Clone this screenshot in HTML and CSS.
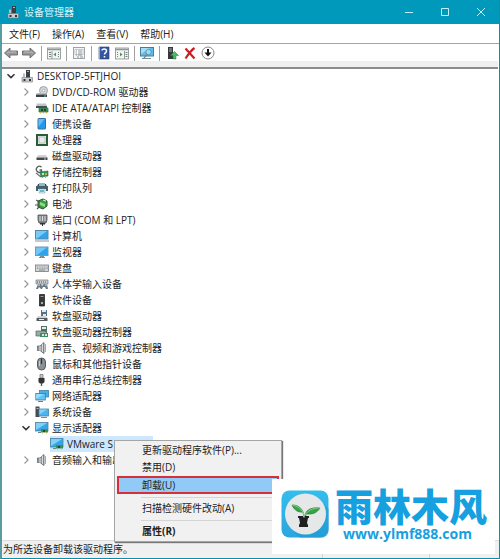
FILE: index.html
```html
<!DOCTYPE html>
<html lang="zh-CN">
<head>
<meta charset="utf-8">
<title>设备管理器</title>
<link rel="stylesheet" href="styles.css">
</head>
<body>
<svg class="defs" aria-hidden="true">
  <symbol id="closed" viewBox="0 0 12 12"><path d="M4.500 2.500L8 6 4.500 9.500" fill="none" stroke="#999" stroke-width="1.200"/></symbol>
  <symbol id="open" viewBox="0 0 12 12"><path d="M2.500 4.200L6 7.600 9.500 4.200" fill="none" stroke="#333" stroke-width="1.500"/></symbol>
  <symbol id="pc" viewBox="0 0 14 14"><path d="M6 1h4v8H6z" fill="#3a3f46"/><path d="M7 2h2v1H7z" fill="#a9b4bd"/><path d="M2 8.500h10.500V13H2z" fill="#c9cdd0" stroke="#777" stroke-width=".6"/><path d="M3.500 10h2v2h-2zM9 10h2v2H9z" fill="#333"/><path d="M3 5l1-1 1 1v3H3z" fill="#bbb"/></symbol>
  <symbol id="dvd" viewBox="0 0 14 14"><circle cx="8.500" cy="5.500" r="4" fill="#d5d8da" stroke="#8b9093" stroke-width=".8"/><circle cx="8.500" cy="5.500" r="1.300" fill="#fff" stroke="#888" stroke-width=".6"/><path d="M2 8h8l2 1.500H1z" fill="#bcc0c2"/><path d="M1 9.500h11V12H1z" fill="#3d4144"/><path d="M9 10.500h2v1H9z" fill="#6c9"/></symbol>
  <symbol id="ide" viewBox="0 0 14 14"><path d="M2 2.500h9l1 3H1z" fill="#bfc4c6"/><path d="M1 5h11v2H1z" fill="#4a5053"/><path d="M4 7h9v4H4z" fill="#3d9a5a" stroke="#246b3d" stroke-width=".7"/><path d="M6 8h2v2H6zM9 8h2v2H9z" fill="#263d30"/><path d="M5 11h1v1.500H5zM8 11h1v1.500H8zM11 11h1v1.500h-1z" fill="#d3b448"/></symbol>
  <symbol id="portable" viewBox="0 0 14 14"><rect x="3" y="1.500" width="7.500" height="10.500" rx=".6" fill="#2397ed" stroke="#3d6f96"/><path d="M3.500 2h6l-6 8z" fill="#61bcfa"/></symbol>
  <symbol id="cpu" viewBox="0 0 14 14"><rect x="2" y="2" width="10" height="10" fill="#e8ece8" stroke="#2c5a3c" stroke-width="2"/><path d="M4 4h6v6H4z" fill="none" stroke="#b4c4b8"/></symbol>
  <symbol id="disk" viewBox="0 0 14 14"><path d="M3 6h8l1.500 2.500h-11z" fill="#d1d3d4"/><path d="M1.500 8.500h11V11h-11z" fill="#45494b"/><path d="M9 9.500h2v1H9z" fill="#b8d8c2"/></symbol>
  <symbol id="storage" viewBox="0 0 14 14"><path d="M6.500 2.200A3 3 0 1 0 6.500 6.500V5H4.500" fill="none" stroke="#58605c" stroke-width="1.300"/><path d="M1 8l5 4" stroke="#777" stroke-width="1.500"/><path d="M5 7l8-1v5l-7 1z" fill="#32935a" stroke="#23663b" stroke-width=".6"/><path d="M7 8h2v2H7z" fill="#d0d9d3"/><path d="M10 8h2v2h-2zM7 12h1v1H7zM10 11h1v2h-1z" fill="#d8a72d"/></symbol>
  <symbol id="printer" viewBox="0 0 14 14"><path d="M3 3h8l1 3H2z" fill="#30474e"/><path d="M4 2h6v3H4z" fill="#8bbcc8"/><path d="M1 5h12v5h-2V8H3v2H1z" fill="#466069"/><path d="M4 8h6v4H4z" fill="#dff4f9" stroke="#6b91a0" stroke-width=".5"/><path d="M5 9h4v2H5z" fill="#57bdda"/></symbol>
  <symbol id="battery" viewBox="0 0 14 14"><path d="M3 4l5-2 4 2v5l-4 3-5-2z" fill="#3c9b4a" stroke="#24582d"/><path d="M5 5l5 2v3L5 8z" fill="#8fdb82"/><path d="M1 3l4 2M0 8h4M2 12l3-3" stroke="#555" stroke-width="1.200"/><path d="M8 3l3 1" stroke="#d6f4cd"/></symbol>
  <symbol id="port" viewBox="0 0 14 14"><path d="M3 2h9v5l-1 3H4L3 7z" fill="#84888a" stroke="#4d5154" stroke-width=".8"/><path d="M5 3v5M7.500 3v5M10 3v5" stroke="#d8dcde"/><path d="M5 10h5v1.500H8V13H7v-1.500H5z" fill="#333"/></symbol>
  <symbol id="computer" viewBox="0 0 14 14"><rect x=".5" y="1.500" width="12.500" height="8.500" fill="#32a4e8" stroke="#5489a7"/><path d="M1 2h11L2 9.500H1z" fill="#79cbf6"/><path d="M0 12h14" stroke="#8c9499"/></symbol>
  <symbol id="monitor" viewBox="0 0 14 14"><rect x=".5" y="2" width="12.500" height="8.500" fill="#2da4e9" stroke="#6c9bb6"/><path d="M1 2.500h11L2 10H1z" fill="#73c6f5"/><path d="M5 11h4v1h1v1H4v-1h1z" fill="#778e9c"/></symbol>
  <symbol id="keyboard" viewBox="0 0 14 14"><rect x=".5" y="4" width="13" height="6.500" fill="#d2d5d6" stroke="#777b7e" stroke-width=".8"/><path d="M2 6h11M2 7.500h11" stroke="#85898c" stroke-width=".7" stroke-dasharray="1 .7"/><path d="M4 9h6" stroke="#888"/></symbol>
  <symbol id="hid" viewBox="0 0 14 14"><path d="M1 3h12v4H1z" fill="#c9cdd0" stroke="#777" stroke-width=".7"/><path d="M2 5h10" stroke="#555" stroke-dasharray="1 1"/><path d="M1 12l2-5h3l1 2 2-2h3l1 5h-2l-1-2H8L7 12H6l-2-2-1 2z" fill="#687986"/><path d="M3 8h2M10 8h2" stroke="#cce3f4"/></symbol>
  <symbol id="software" viewBox="0 0 14 14"><path d="M4.500 1.500h5V13h-5z" fill="#363a3c" stroke="#17191a" stroke-width=".7"/><path d="M5.500 3.500h3" stroke="#90999d"/><path d="M6 9h2v2H6z" fill="#9bb8a5"/></symbol>
  <symbol id="floppy" viewBox="0 0 14 14"><path d="M6 1h6v6H6z" fill="#54738b"/><path d="M7 1h4v2H7zM8 5h3v2H8z" fill="#e4e9eb"/><path d="M3 7h8l1.500 2h-11z" fill="#d0d3d5"/><path d="M1.500 9h11v3h-11z" fill="#555b5e"/><path d="M4 10.500h5" stroke="#eee"/></symbol>
  <symbol id="floppyctl" viewBox="0 0 14 14"><path d="M6 1h6v6H6z" fill="#4d7269"/><path d="M7 2h4v2H7z" fill="#e5ecea"/><path d="M1 6h9l2 2v3H1z" fill="#9caaa3" stroke="#56605b" stroke-width=".7"/><path d="M5 8h8v4H5z" fill="#37915c"/><path d="M7 9h2v2H7zM10 9h2v2h-2z" fill="#d8e7dc"/></symbol>
  <symbol id="speaker" viewBox="0 0 14 14"><path d="M2.500 5H5l4-3.500v11L5 9.500H2.500z" fill="#91979c" stroke="#5f656a" stroke-width=".8"/><path d="M5 5v5" stroke="#e2e4e5"/><path d="M10.500 3v8" stroke="#a7acb0"/><path d="M7.500 3v8" stroke="#d6d8da"/></symbol>
  <symbol id="mouse" viewBox="0 0 14 14"><rect x="2.500" y="1" width="8" height="12" rx="4" fill="#8a9094" stroke="#565b5e"/><path d="M6.500 1.500V7" stroke="#333" stroke-width="1.200"/><path d="M4.500 4v5" stroke="#c5cbce"/></symbol>
  <symbol id="usb" viewBox="0 0 14 14"><path d="M5 1.500h3V5H5z" fill="#ccc" stroke="#666" stroke-width=".7"/><path d="M3.500 5h6v4L8 10.500H5L3.500 9z" fill="#333"/><path d="M6.500 10v3" stroke="#555" stroke-width="1.300"/></symbol>
  <symbol id="network" viewBox="0 0 14 14"><rect x="4.500" y="1.500" width="9" height="6.500" fill="#45afe9" stroke="#447fa0" stroke-width=".8"/><rect x=".8" y="4.500" width="9.500" height="6.500" fill="#5fc4f7" stroke="#3f7ba0" stroke-width=".8"/><path d="M1.200 5H9l-7.800 5z" fill="#98dcfb"/><path d="M3 12.500h5" stroke="#5b8295"/></symbol>
  <symbol id="system" viewBox="0 0 14 14"><path d="M.5 1.500h4V12h-4z" fill="#454b4f"/><path d="M1.500 3h2v1h-2z" fill="#b7bec1"/><rect x="4" y="4" width="9.500" height="7" fill="#49b5ef" stroke="#4685a8" stroke-width=".8"/><path d="M4.500 4.500H12l-7.500 5z" fill="#85d2fa"/><path d="M6 12.500h6" stroke="#708c9b"/></symbol>
  <symbol id="display" viewBox="0 0 14 14"><rect x=".5" y="1.500" width="12.500" height="8.500" fill="#35a7e8" stroke="#4f839e" stroke-width=".8"/><path d="M1 2h11L1 9z" fill="#83cff5"/><path d="M6 8h7v3.500H6z" fill="#399153"/><path d="M8 9h2v2H8z" fill="#254b31"/><path d="M7 12h1M11 12h1" stroke="#d7ae36"/><path d="M3 11.500h3" stroke="#688391"/></symbol>
  <symbol id="back" viewBox="0 0 14 14"><path d="M.5 7L6 2v3h7.500v4H6v3z" fill="#989898" stroke="#686868" stroke-width=".9"/><path d="M3 7l2-1h7" fill="none" stroke="#bbb"/></symbol>
  <symbol id="forward" viewBox="0 0 14 14"><path d="M13.500 7L8 2v3H.5v4H8v3z" fill="#989898" stroke="#686868" stroke-width=".9"/><path d="M2 6h7l2 1" fill="none" stroke="#bbb"/></symbol>
  <symbol id="consoletree" viewBox="0 0 14 14"><rect x=".5" y="2" width="13" height="11" fill="#f2f5f2" stroke="#848b8c" stroke-width=".8"/><path d="M1 3.500h12" stroke="#8b959b" stroke-width="1.500"/><path d="M5 5v8" stroke="#999"/><path d="M2 6.500h2M2 8.500h2M2 10.500h2M11 6.500h1M11 8.500h1M11 10.500h1" stroke="#718387"/><path d="M9 6.500l-2.500 2 2.500 2z" fill="#49925a"/></symbol>
  <symbol id="properties" viewBox="0 0 14 14"><rect x="1.500" y="1.500" width="11" height="11" fill="#f4f4f4" stroke="#969b9e" stroke-width=".9"/><path d="M3 3.500h8v5H3z" fill="#fff" stroke="#a3aaae" stroke-width=".6"/><path d="M4 5h1M6 5h4M4 7h1M6 7h4M4 9h1M6 9h4M5 11h2M8 11h3" stroke="#8c9499"/></symbol>
  <symbol id="help" viewBox="0 0 14 14"><path d="M2 1h10v12H2z" fill="#3556a3" stroke="#263a72" stroke-width=".6"/><path d="M2.500 1v12" stroke="#8da8dc"/><path d="M5 4.500C5 2.500 9.500 2.500 9.500 5 9.500 6.800 7.500 6.500 7.500 8.500M7.500 10v1.500" fill="none" stroke="#fff" stroke-width="1.500"/></symbol>
  <symbol id="actionpane" viewBox="0 0 14 14"><rect x=".5" y="2" width="13" height="11" fill="#f2f5f2" stroke="#848b8c" stroke-width=".8"/><path d="M1 3.500h12" stroke="#8b959b" stroke-width="1.500"/><path d="M9.500 5v8" stroke="#999"/><path d="M2 6.500h1M2 8.500h1M2 10.500h1M10.500 6.500h2M10.500 8.500h2M10.500 10.500h2" stroke="#718387"/><path d="M5 6.500l2.500 2L5 10.500z" fill="#49925a"/></symbol>
  <symbol id="scan" viewBox="0 0 14 14"><rect x=".5" y="1.500" width="13" height="8.500" fill="#64bce6" stroke="#477d98"/><path d="M1 2h9L1 8z" fill="#a5def5"/><circle cx="8.500" cy="6" r="2.700" fill="#9cdcf5" stroke="#3f91b6" stroke-width=".8"/><path d="M7 8l-3 4" stroke="#7a898e" stroke-width="1.400"/><path d="M2 12.500h9" stroke="#78909b"/></symbol>
  <symbol id="update" viewBox="0 0 14 14"><path d="M3 1h5v12H3z" fill="#36393a"/><path d="M4 3h3M4 5h3" stroke="#a8adaf"/><path d="M8 13V9.500H5.500L9.500 5.500l4 4H11V13z" fill="#4cb868" stroke="#237a3a" stroke-width=".5"/></symbol>
  <symbol id="remove" viewBox="0 0 14 14"><path d="M2.500 2.500l9 10M11.500 2c-3 2-6 6-9 10.500" fill="none" stroke="#c91e25" stroke-width="2.200"/></symbol>
  <symbol id="disable" viewBox="0 0 14 14"><circle cx="7" cy="7" r="6" fill="#fff" stroke="#7a7a7a" stroke-width=".9"/><path d="M7 3v4" stroke="#111" stroke-width="2"/><path d="M3.500 6.500h7L7 10.500z" fill="#111"/></symbol>
</svg>

<div class="window">
  <header class="titlebar">
    <svg class="icon"><use href="#pc"/></svg>
    <h1 class="title">设备管理器</h1>
    <div class="controls">
      <button class="control" aria-label="最小化"><svg viewBox="0 0 10 10"><path d="M1 5.500h8"/></svg></button>
      <button class="control" aria-label="最大化"><svg viewBox="0 0 10 10"><path d="M1.500 1.500h7v7h-7z"/></svg></button>
      <button class="control" aria-label="关闭"><svg viewBox="0 0 10 10"><path d="M1 1l8 8M9 1L1 9"/></svg></button>
    </div>
  </header>

  <nav class="menubar">
    <button>文件(F)</button><button>操作(A)</button><button>查看(V)</button><button>帮助(H)</button>
  </nav>

  <div class="toolbar" role="toolbar">
    <button aria-label="后退"><svg class="icon"><use href="#back"/></svg></button>
    <button aria-label="前进"><svg class="icon"><use href="#forward"/></svg></button>
    <i class="divider"></i>
    <button aria-label="显示控制台树"><svg class="icon"><use href="#consoletree"/></svg></button>
    <i class="divider"></i>
    <button aria-label="属性"><svg class="icon"><use href="#properties"/></svg></button>
    <i class="divider"></i>
    <button aria-label="帮助"><svg class="icon"><use href="#help"/></svg></button>
    <button aria-label="显示操作窗格"><svg class="icon"><use href="#actionpane"/></svg></button>
    <i class="divider"></i>
    <button aria-label="扫描"><svg class="icon"><use href="#scan"/></svg></button>
    <i class="divider"></i>
    <button aria-label="更新驱动"><svg class="icon"><use href="#update"/></svg></button>
    <button aria-label="卸载"><svg class="icon"><use href="#remove"/></svg></button>
    <button aria-label="禁用"><svg class="icon"><use href="#disable"/></svg></button>
  </div>

  <main class="content">
    <ul class="tree" role="tree">
      <li>
        <div class="row"><svg class="chevron"><use href="#open"/></svg><svg class="icon"><use href="#pc"/></svg><span>DESKTOP-5FTJHOI</span></div>
        <ul>
          <li class="row"><svg class="chevron"><use href="#closed"/></svg><svg class="icon"><use href="#dvd"/></svg><span>DVD/CD-ROM 驱动器</span></li>
          <li class="row"><svg class="chevron"><use href="#closed"/></svg><svg class="icon"><use href="#ide"/></svg><span>IDE ATA/ATAPI 控制器</span></li>
          <li class="row"><svg class="chevron"><use href="#closed"/></svg><svg class="icon"><use href="#portable"/></svg><span>便携设备</span></li>
          <li class="row"><svg class="chevron"><use href="#closed"/></svg><svg class="icon"><use href="#cpu"/></svg><span>处理器</span></li>
          <li class="row"><svg class="chevron"><use href="#closed"/></svg><svg class="icon"><use href="#disk"/></svg><span>磁盘驱动器</span></li>
          <li class="row"><svg class="chevron"><use href="#closed"/></svg><svg class="icon"><use href="#storage"/></svg><span>存储控制器</span></li>
          <li class="row"><svg class="chevron"><use href="#closed"/></svg><svg class="icon"><use href="#printer"/></svg><span>打印队列</span></li>
          <li class="row"><svg class="chevron"><use href="#closed"/></svg><svg class="icon"><use href="#battery"/></svg><span>电池</span></li>
          <li class="row"><svg class="chevron"><use href="#closed"/></svg><svg class="icon"><use href="#port"/></svg><span>端口 (COM 和 LPT)</span></li>
          <li class="row"><svg class="chevron"><use href="#closed"/></svg><svg class="icon"><use href="#computer"/></svg><span>计算机</span></li>
          <li class="row"><svg class="chevron"><use href="#closed"/></svg><svg class="icon"><use href="#monitor"/></svg><span>监视器</span></li>
          <li class="row"><svg class="chevron"><use href="#closed"/></svg><svg class="icon"><use href="#keyboard"/></svg><span>键盘</span></li>
          <li class="row"><svg class="chevron"><use href="#closed"/></svg><svg class="icon"><use href="#hid"/></svg><span>人体学输入设备</span></li>
          <li class="row"><svg class="chevron"><use href="#closed"/></svg><svg class="icon"><use href="#software"/></svg><span>软件设备</span></li>
          <li class="row"><svg class="chevron"><use href="#closed"/></svg><svg class="icon"><use href="#floppy"/></svg><span>软盘驱动器</span></li>
          <li class="row"><svg class="chevron"><use href="#closed"/></svg><svg class="icon"><use href="#floppyctl"/></svg><span>软盘驱动器控制器</span></li>
          <li class="row"><svg class="chevron"><use href="#closed"/></svg><svg class="icon"><use href="#speaker"/></svg><span>声音、视频和游戏控制器</span></li>
          <li class="row"><svg class="chevron"><use href="#closed"/></svg><svg class="icon"><use href="#mouse"/></svg><span>鼠标和其他指针设备</span></li>
          <li class="row"><svg class="chevron"><use href="#closed"/></svg><svg class="icon"><use href="#usb"/></svg><span>通用串行总线控制器</span></li>
          <li class="row"><svg class="chevron"><use href="#closed"/></svg><svg class="icon"><use href="#network"/></svg><span>网络适配器</span></li>
          <li class="row"><svg class="chevron"><use href="#closed"/></svg><svg class="icon"><use href="#system"/></svg><span>系统设备</span></li>
          <li>
            <div class="row"><svg class="chevron"><use href="#open"/></svg><svg class="icon"><use href="#display"/></svg><span>显示适配器</span></div>
            <ul>
              <li class="row selected">
                <i class="chevron"></i>
                <div class="highlight"><svg class="icon"><use href="#display"/></svg><span>VMware S</span></div>
                <div class="context" role="menu">
                  <button role="menuitem">更新驱动程序软件(P)...</button>
                  <button role="menuitem">禁用(D)</button>
                  <button role="menuitem" class="marked">卸载(U)</button>
                  <hr>
                  <button role="menuitem">扫描检测硬件改动(A)</button>
                  <hr>
                  <button role="menuitem" class="default">属性(R)</button>
                </div>
              </li>
            </ul>
          </li>
          <li class="row"><svg class="chevron"><use href="#closed"/></svg><svg class="icon"><use href="#speaker"/></svg><span>音频输入和输出</span></li>
        </ul>
      </li>
    </ul>
  </main>

  <footer class="status"><span>为所选设备卸载该驱动程序。</span><span></span><span></span></footer>
</div>

<aside class="brand">
  <svg class="emblem" viewBox="0 0 48 48" aria-hidden="true">
    <defs><linearGradient id="blue" x1="0" y1="0" x2="0" y2="1"><stop offset="0" stop-color="#33bdec"/><stop offset="1" stop-color="#2aa6de"/></linearGradient></defs>
    <rect x=".5" y=".5" width="47" height="47" rx="8" fill="url(#blue)"/>
    <path d="M10 39L39 10l9 9v21a8 8 0 0 1-8 8H19z" fill="#168fc8" opacity=".35"/>
    <circle cx="24.500" cy="24" r="20.500" fill="#e5e7e8"/>
    <path d="M23 26C22 19 18 15 11 15c3 6 6 7 10 7M24 27c0-7 6-10 15-9-4 6-8 6-13 6" fill="#37a448" stroke="#218236" stroke-width=".8"/>
    <path d="M11 15c6 1 10 4 12 10M39 18c-7 0-12 2-15 7" fill="none" stroke="#b6dda9" stroke-width=".7"/>
    <path d="M17 26h5l1 2 1-2h4v2h-1l-1 5 1 2v2h-9v-2l1-2-1-5h-1z" fill="#1f2022"/>
  </svg>
  <div class="wordmark"><strong>雨林木风</strong><span>www.ylmf888.com</span></div>
</aside>
</body>
</html>
```

FILE: styles.css
```css
* { box-sizing: border-box; }

body {
  margin: 0;
  font: 10px/16px "Open Sans", "Noto Sans CJK SC", sans-serif;
  color: #222;
  background: #fff;
}

button {
  padding: 0;
  border: 0;
  background: none;
  font: inherit;
  color: inherit;
}

ul { margin: 0; padding: 0; list-style: none; }
svg { display: block; }
.defs { position: absolute; width: 0; height: 0; }
.icon { flex: none; width: 14px; height: 14px; }
.chevron { flex: none; width: 12px; height: 12px; }

.window {
  display: flex;
  flex-direction: column;
  min-height: 100vh;
  border: solid #0a8fa8;
  border-width: 0 1px 1px 2px;
  border-left-color: #5a9ba3;
}

.titlebar {
  display: flex;
  align-items: center;
  gap: 4px;
  height: 24px;
  margin-left: -2px;
  padding-left: 6px;
  background: #0099bc;
  color: #d8f4fa;
}
.title { margin: 0; font-size: 10px; font-weight: 400; }
.controls { display: flex; margin-left: auto; }
.control { display: grid; place-items: center; width: 36px; height: 24px; }
.control svg { width: 10px; height: 10px; fill: none; stroke: #c4f2fa; }

.menubar {
  display: flex;
  gap: 12px;
  height: 20px;
  padding: 1px 7px 0;
  border-bottom: 1px solid #a2a6a6;
}

.toolbar {
  display: flex;
  align-items: center;
  gap: 4px;
  height: 17px;
  padding: 1px 2px 0;
}
.divider { width: 1px; height: 15px; margin: 0 1px; background: #a0a0a0; }

.content {
  flex: 1;
  margin-right: 1px;
  border-top: 6px solid #efefef;
  box-shadow: inset 0 2px #8c8c8c;
}
.tree { padding: 1px 0 0 3px; }
.tree ul { padding-left: 15px; }
.row {
  display: flex;
  align-items: center;
  gap: 3px;
  height: 16px;
  white-space: nowrap;
}
.selected { position: relative; }
.highlight {
  display: flex;
  align-items: center;
  gap: 3px;
  width: 103px;
  background: #cce8ff;
}

.context {
  position: absolute;
  top: 4px;
  left: 79px;
  width: 168px;
  padding: 1px 2px;
  border: 1px solid #a5a5a5;
  background: #f1f1f1;
  box-shadow: 1px 1px 1px #777;
}
.context button {
  display: block;
  width: 100%;
  height: 17px;
  padding-left: 25px;
  line-height: 17px;
  text-align: left;
}
.context .marked {
  height: 18px;
  padding-left: 23px;
  border: 2px solid #d62f3c;
  background: #91c9f7;
  line-height: 14px;
}
.context .default { font-weight: 700; }
.context hr { margin: 3px 2px 2px 24px; border: 0; border-top: 1px solid #d5d5d5; }

.status {
  display: grid;
  grid-template-columns: 1fr 107px 70px;
  height: 18px;
  padding-left: 1px;
  border-top: 1px solid #dcdcdc;
  background: #f0f0f0;
}
.status span + span { border-left: 1px solid #d5d5d5; }

.brand {
  position: absolute;
  right: 5px;
  bottom: 5px;
  display: flex;
  gap: 6px;
  width: 223px;
  height: 75px;
  padding: 8px 0 0 9px;
  background: #fff;
  color: #16a0df;
}
.emblem { flex: none; width: 48px; height: 48px; margin-top: 3px; }
.wordmark { display: flex; flex-direction: column; gap: 2px; }
.wordmark strong { font-size: 38px; line-height: 38px; font-weight: 900; }
.wordmark span { padding-left: 8px; font-size: 14px; line-height: 14px; font-weight: 700; }
```
